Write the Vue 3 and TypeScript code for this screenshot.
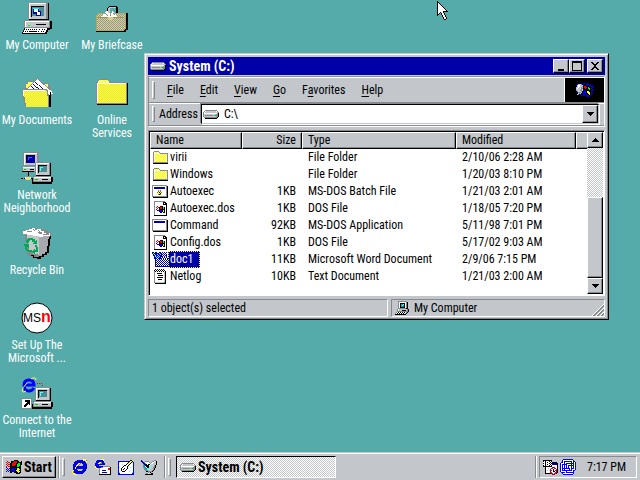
<script setup lang="ts">
import { h, ref, type FunctionalComponent } from 'vue'

type Bitmap = string[]

const palette: Record<string, string> = {
  k: '#000000', g: '#868a8e', s: '#c3c7cb', w: '#ffffff', n: '#00aa55',
  b: '#0000aa', B: '#0000ff', c: '#55ffff', t: '#00aaaa', y: '#ffff55',
  Y: '#ffff00', o: '#868a00', r: '#ff0000', R: '#aa0055', N: '#00ff00',
}

const bitmaps: Record<string, Bitmap> = {
  drive: [
    '..gggggggggggg..',
    '.gwsssssssssswg.',
    'gwsssssssssssssg',
    'gwwwwwwwwwwwwwgk',
    'gssssssssssssggk',
    'gsggggggggsNnggk',
    'gssssssssssssggk',
    '.gggggggggggggk.',
    '..kkkkkkkkkkkk..',
  ],
  folder: [
    '.ggggg.........',
    'gyyyyyg........',
    'gwwwwwwgggggggg',
    'gwyYwYyYwYyYwYg',
    'gwYyYwYyYwYyYwg',
    'gwyYwYyYwYyYwYg',
    'gwYyYwYyYwYyYwg',
    'gwyYwYyYwYyYwYg',
    'gwYyYwYyYwYyYwg',
    'gwyYwYyYwYyYwYg',
    'gwYyYwYyYwYyYwg',
    'ggggggggggggggg',
    'kkkkkkkkkkkkkkk',
  ],
  batch: [
    'ggggggggggggggg.',
    'gwwwwwwwwwwwwwgk',
    'gwbbbbbbBbBbBwgk',
    'gwbbbbbbbbbbbwgk',
    'gwwwwwwwwwwwwwgk',
    'gwwwwwowowwwwwgk',
    'gwwwwwoYowwwwwgk',
    'gwwwwoYkYowwwwgk',
    'gwwwwwYYkwwwwwgk',
    'gwwwwwokowwwwwgk',
    'gwwwwwwwwwwwwwgk',
    'gggggggggggggggk',
    '.kkkkkkkkkkkkkkk',
  ],
  app: [
    'ggggggggggggggg.',
    'gwwwwwwwwwwwwwgk',
    'gwbbbbbbBbBbBwgk',
    'gwbbbbbbbbbbbwgk',
    'gwwwwwwwwwwwwwgk',
    'gwwwwwwwwwwwwwgk',
    'gwwwwwwwwwwwwwgk',
    'gwwwwwwwwwwwwwgk',
    'gwwwwwwwwwwwwwgk',
    'gwwwwwwwwwwwwwgk',
    'gwwwwwwwwwwwwwgk',
    'gggggggggggggggk',
    '.kkkkkkkkkkkkkkk',
  ],
  system: [
    'ggggggggggg..',
    'gwwwwwwwwkkk.',
    'gwwwwwwwwkwkk',
    'gwwwwwwwwkkkk',
    'gwwwwwwwwwwwk',
    'gwwrwwkkkwwwk',
    'gwrwrkrrkNkwk',
    'gwwrwkrrkNkwk',
    'gwBwwkkkkkkwk',
    'gwwBBkBBkYkwk',
    'gwwwwkBBkYkwk',
    'gwwwwwkkwkkwk',
    'gwwwwwwwwwwwk',
    'gwwwwwwwwwwwk',
    'kkkkkkkkkkkkk',
  ],
  word: [
    'bb.bb..bb.b.b.b.',
    'BcbbbBbcBb.b.b..',
    '.bcbBcbBcbb.b.b.',
    '.bBcbbcBbbwbwbb.',
    '..bcBcbcbbbwbwb.',
    '..bBcbcBbwbwbwbw',
    '..bbb.bbbbwbwbwb',
    '...bwbwbwbwbwbwb',
    '...bbwbwbwbwbwbw',
    '...bwbwbwbwbwbwb',
    '...bbwbwbwbwbwbw',
    '...bwbwbwbwbwbwb',
    '...bbwbwbwbwbwbw',
    '...bwbwbwbwbwbwb',
    '...bbbbbbbbbbbbb',
  ],
  text: [
    '.k.k.k.k.k..',
    'kwkwkwkwkwk.',
    'gkwkwkwkwkwk',
    'gwwwwwwwwwsk',
    'gwwkkkkkwwsk',
    'gwwwwwwwwwsk',
    'gwwwkkkkkwsk',
    'gwwwwwwwwwsk',
    'gwwkkkkkkwsk',
    'gwwwwwwwwwsk',
    'gwwwkkkkwwsk',
    'gwwwwwwwwwsk',
    'gwwwwwwwwwsk',
    'gsssssssssgk',
    '.kkkkkkkkkkk',
  ],
  pc: [
    '...ggggggggg..',
    '...gwwwwwwwgk.',
    '...gwkkkkkwgk.',
    '...gwkttckwgk.',
    '...gwktctkwgk.',
    '...gwktttkwgk.',
    '...gwkkkkkwgk.',
    '...ggggggggkk.',
    '..gwssssssssgk',
    '..gwNsskkkksgk',
    '..gggggggggggk',
    '.gwkwkwkwkwgk.',
    'gwkwkwkwkwgk..',
    'kkkkkkkkkkk...',
  ],
  flag: [
    '........kkkk....',
    '.r...kkkrrrkk..k',
    'r.rr.kkrrrrkkkkk',
    '.r..kkrrrrkkNNkk',
    'r.rrkkrrrrkNNNkk',
    '.r..kkrrrkkNNNk.',
    'r.rrkkkkkkkNNkk.',
    'B...kkkkkkkkkkk.',
    '.B.BkkBBBBkYYkk.',
    'B.B.kBBBBkkYYYk.',
    '.B.BkBBBBkYYYkk.',
    'B.B.kkkBBkkYYYk.',
    '....kk..kkkkYkk.',
    '..........kkkk..',
  ],
  brand: [
    '.....B.BB..B......',
    '.BsssgkBkkBBBB....',
    'BswwsssBkkkBkBB.B.',
    '.swwssgkrrkkkkBB..',
    'sswssgskrrrkNkkkBB',
    'swsssggkkrkkNNkB..',
    'sssssgskkkkkkNkkBB',
    'gsssggsBBkkkkkkB..',
    '.gsssgkkBBkYYkkkB.',
    'B.gggskBBBkYYYkB..',
    '..sgs.BkBBkkYYkBB.',
    '.sg.B..B.BBkkYkB..',
    '.....B.BB.BBBkB...',
    '..........B.BB....',
  ],
  ie: [
    '...........yyy..',
    '.....bBBBBby.yo.',
    '...bBBBBBBBBb.y.',
    '..bBBBbbbBBBBby.',
    '..BBBb.yo.bBBBo.',
    '.bBBb.yo...BBBb.',
    '.BBB.yo....bBBb.',
    '.BBbyBBBBBBBBBb.',
    '.BByBBBBBBBBBBb.',
    '.BByBBBBBBBBBBb.',
    '.BBBb......bbb..',
    '.yBBBb....bBBb..',
    'yoBBBBbbbBBBb...',
    'yobBBBBBBBBb....',
    '.yyobBBBBbb.....',
    '..yyy...........',
  ],
  mail: [
    '......yyy.......',
    '..bBBBBby.......',
    '.bBBbbBBb.......',
    '.BBb.yoBB.......',
    'bBByyooBBb......',
    'BBBBBBBBBb......',
    'bBBb............',
    'ybBBbbBBggggggg.',
    'yobBBBggwwwwwwwk',
    '.yy.gwwwwwwwwrrk',
    '....gwwwwwwwwrrk',
    '....gwwbbbbwwwwk',
    '....gwwwwwwwwwwk',
    '....gwwbbbbbwwwk',
    '....gwwwwwwwwwwk',
    '....kkkkkkkkkkkk',
  ],
  desktop: [
    '............kkY.',
    'BBBBBBBBBBBkYyk.',
    'BcwwwwwwwwkYykcB',
    'BwwwwwwwwkYykwwB',
    'BwwwcwwwkwykwwwB',
    'BwwwwwkkwwkwwwwB',
    'BwwwwkwwwkcwwwwB',
    'BcwwkwwwwkwwcwwB',
    'BwwkwwkwwkwwwwwB',
    'BwwkwkwwkwwwwwwB',
    'BwwkwwwkwwwwwwwB',
    'BwwwkkkwwwwcwwwB',
    'BcwwwwwwwwwwwwcB',
    'BBwwwwwwwwwwwwBB',
    'BbBBBBBBBBBBBBbB',
  ],
  dish: [
    'b............gg.',
    'bb..gggg...ggwsk',
    '.bBgwwwwg.gwwssk',
    '..bBgwwwwgwwsssk',
    '..gbBkwkkwcssssk',
    '..gtkkkkwcsssgk.',
    '..gtwkkkccsssgk.',
    '..gttwkkcsssggk.',
    '...gttccssssgk..',
    '...ggtcsssssgk..',
    '....gggssssgk...',
    '.....kkggggk....',
    '.......gsk......',
    '.....ggwsskk....',
    '....kkkkkkkk....',
  ],
  schedule: [
    'kkkkkkkkk......',
    'kwkwwwkwk......',
    'wwkwkwwkwkkkkk.',
    'kwkwwwkwkbbbbbk',
    'wwkwkwwkwbbbbbk',
    'kwkwwwkwkwwwwwk',
    'kkkkkkkkkwwwwwk',
    '..kwwwwwwRRRwwk',
    '..kwwswsRrwrRwk',
    '..kwwwwRwwkwwRk',
    '..kwswsRrwkwrRk',
    '..kwwwwRwwkkwRk',
    '..kwwwwRrwwwrRk',
    '..kkkkkkRrwrRk.',
    '.........RRR...',
  ],
  network: [
    '...BBBBBBBBBB...',
    '..BwwwwwwwwwwB..',
    '..BwBBBBBBBBwBB.',
    '.BBwBwwwwwwBwBwB',
    'BwwwBwBBBBBBBBwB',
    'BwBBBBBwwwwBwBwB',
    'BwBwBwBwBBBBBBwB',
    'BwBwBwBwBwwBwBwB',
    'BwBwBwBwBwwBwBwB',
    'BwBBBBBBBBwBBBwB',
    'BwBwBwwwwBwBwwwB',
    'BwBBBBBBBBBBwBB.',
    'BwwwwwBwwwwwwB..',
    '.BBBBwBBBBBBBB..',
    '..BwwwwwwwwwwB..',
    '...BBBBBBBBBB...',
  ],
  cursor: [
    'k...........',
    'kk..........',
    'kwk.........',
    'kwwk........',
    'kwwwk.......',
    'kwwwwk......',
    'kwwwwwk.....',
    'kwwwwwwk....',
    'kwwwwwwwk...',
    'kwwwwwwwwk..',
    'kwwwwwkkkkk.',
    'kwwkwwk.....',
    'kwk.kwwk....',
    'kk..kwwk....',
    'k....kwwk...',
    '.....kwwk...',
    '......kwwk..',
    '......kwwk..',
    '.......kk...',
  ],
}

// Turns each run of equal letters in a bitmap into one rectangle of a path.
const PixelIcon: FunctionalComponent<{ name: string }> = ({ name }) => {
  const rows = bitmaps[name]
  const width = Math.max(...rows.map((row) => row.length))
  const paths: Record<string, string> = {}
  rows.forEach((row, y) => {
    for (const run of row.matchAll(/([^.])\1*/g)) {
      const n = run[0].length
      paths[run[1]] = (paths[run[1]] ?? '') + `M${run.index} ${y}h${n}v1h-${n}z`
    }
  })
  return h(
    'svg',
    { width, height: rows.length, viewBox: `0 0 ${width} ${rows.length}`, 'shape-rendering': 'crispEdges', 'aria-hidden': 'true' },
    Object.entries(paths).map(([key, d]) => h('path', { d, fill: palette[key] })),
  )
}
PixelIcon.props = ['name']

const desktopIcons = [
  { id: 'computer', label: 'My Computer' },
  { id: 'documents', label: 'My Documents' },
  { id: 'network', label: 'Network\nNeighborhood' },
  { id: 'recycle', label: 'Recycle Bin' },
  { id: 'msn', label: 'Set Up The\nMicrosoft ...' },
  { id: 'connect', label: 'Connect to the\nInternet' },
  { id: 'briefcase', label: 'My Briefcase' },
  { id: 'services', label: 'Online\nServices' },
]

const menus = [
  ['', 'F', 'ile'], ['', 'E', 'dit'], ['', 'V', 'iew'],
  ['', 'G', 'o'], ['F', 'a', 'vorites'], ['', 'H', 'elp'],
]

const files = [
  { name: 'virii', icon: 'folder', size: '', type: 'File Folder', modified: '2/10/06 2:28 AM' },
  { name: 'Windows', icon: 'folder', size: '', type: 'File Folder', modified: '1/20/03 8:10 PM' },
  { name: 'Autoexec', icon: 'batch', size: '1KB', type: 'MS-DOS Batch File', modified: '1/21/03 2:01 AM' },
  { name: 'Autoexec.dos', icon: 'system', size: '1KB', type: 'DOS File', modified: '1/18/05 7:20 PM' },
  { name: 'Command', icon: 'app', size: '92KB', type: 'MS-DOS Application', modified: '5/11/98 7:01 PM' },
  { name: 'Config.dos', icon: 'system', size: '1KB', type: 'DOS File', modified: '5/17/02 9:03 AM' },
  { name: 'doc1', icon: 'word', size: '11KB', type: 'Microsoft Word Document', modified: '2/9/06 7:15 PM' },
  { name: 'Netlog', icon: 'text', size: '10KB', type: 'Text Document', modified: '1/21/03 2:00 AM' },
]

const selected = ref('doc1')
const drive = ref('C:\\')
const launchers = [
  { icon: 'ie', label: 'Internet Explorer' },
  { icon: 'mail', label: 'Mail' },
  { icon: 'desktop', label: 'Show Desktop' },
  { icon: 'dish', label: 'Channels' },
]
</script>

<template>
  <div class="screen">
    <main class="desktop">
      <button v-for="item in desktopIcons" :key="item.id" class="shortcut" type="button">
        <svg width="32" height="32" viewBox="0 0 32 32" shape-rendering="crispEdges" aria-hidden="true">
          <defs>
            <pattern :id="`dots-${item.id}`" width="2" height="2" patternUnits="userSpaceOnUse">
              <path d="M0 0h1v1h-1zM1 1h1v1h-1z" :fill="item.id === 'briefcase' ? '#969684' : '#ffff00'" />
              <path d="M1 0h1v1h-1zM0 1h1v1h-1z" :fill="item.id === 'briefcase' ? '#d8d2a0' : '#e4e474'" />
            </pattern>
          </defs>
          <g v-if="item.id === 'computer'">
            <path d="M7 1h2v-1h19v18h-21z" fill="#868a8e" />
            <path d="M27 1h1v17h-1zM8 17h20v1h-20z" fill="#000" />
            <path d="M8 1h17v16h-17z" fill="#c3c7cb" />
            <path d="M8 1h17v1h-16v15h-1z" fill="#fff" />
            <path d="M10 4h13v1h-12v10h-1z" fill="#000" />
            <path d="M11 5h12v9h-12z" fill="#4a8f93" />
            <path d="M12 6h6v1h-5v4h-1z" fill="#0ff" />
            <path d="M12 7h6v5h-6zM15 9h5v5h-5z" fill="#00a" />
            <path d="M13 7h4v3h-4zM16 10h3v3h-3z" fill="#fff" />
            <path d="M4 19h27v8h-2v1h-25z" fill="#000" />
            <path d="M3 18h26v8h-26z" fill="#868a8e" />
            <path d="M4 19h24v6h-24z" fill="#c3c7cb" />
            <path d="M4 19h24v1h-23v5h-1z" fill="#fff" />
            <path d="M7 23h2v1h-2z" fill="#0f0" />
            <path d="M15 22h10v1h-10z" fill="#000" />
            <path d="M3 26h25v2h-1v2h-1v2h-25v-2h1v-2h1z" fill="#000" />
            <path d="M4 26h22v2h-1v2h-1v1h-22v-1h1v-2h1z" fill="#fff" />
            <path d="M5 27h1v1h-1zM7 27h1v1h-1zM9 27h1v1h-1zM11 27h1v1h-1zM13 27h1v1h-1zM15 27h1v1h-1zM18 27h1v1h-1zM21 27h1v1h-1zM23 27h1v1h-1zM4 29h1v1h-1zM6 29h1v1h-1zM8 29h8v1h-8zM17 29h1v1h-1zM20 29h1v1h-1zM22 29h1v1h-1z" fill="#000" />
          </g>
          <g v-else-if="item.id === 'documents'">
            <path d="M4 10v-4h2v-2h6l2 2h14v3h2v18h-26z" fill="#868a8e" />
            <path d="M5 11v-4h2v-2h5l1 2h14v4z" fill="#ff5" />
            <path d="M5 12l11-11 14 12v3l-3 3z" fill="#868a8e" />
            <path d="M6 13l10-11 14 12-3 4z" fill="#fff" />
            <path d="M14 5h1v1h1v1h1v1h-1v-1h-1v-1h-1zM12 7h1v1h1v1h1v1h1v1h-1v-1h-1v-1h-1v-1h-1zM10 9h1v1h1v1h1v1h-1v-1h-1v-1h-1zM18 8h1v1h1v1h1v1h1v1h-1v-1h-1v-1h-1v-1h-1zM16 10h1v1h1v1h-1v-1h-1z" fill="#00a" />
            <path d="M29 13h1v1h1v2h1v1h-2v1h-2v-3h1z" fill="#fff" />
            <path d="M1 12h25v1h1v5h1v12h-24v-3h-1v-5h-1v-5h-1z" fill="#868a8e" />
            <path d="M2 13h23v1h1v5h1v11h-22v-4h-1v-6h-1v-4h-1z" fill="url(#dots-documents)" />
            <path d="M2 13h22v1h-21v5h-1z" fill="#fff" />
            <path d="M4 30h26v-15h-1v3h-1v12h-24z" fill="#000" />
          </g>
          <g v-else-if="item.id === 'network' || item.id === 'connect'">
            <g v-if="item.id === 'network'">
              <path d="M2 1h1v-1h15v14h-16z" fill="#868a8e" />
              <path d="M3 1h13v12h-13z" fill="#c3c7cb" />
              <path d="M3 1h13v1h-12v11h-1z" fill="#fff" />
              <path d="M5 3h9v1h-8v7h-1z" fill="#000" />
              <path d="M6 4h8v7h-8z" fill="#00a" />
              <path d="M7 5h4v1h-3v2h-1z" fill="#55f" />
              <path d="M1 15h16v5h-16z" fill="#868a8e" />
              <path d="M2 15h14v4h-14z" fill="#c3c7cb" />
              <path d="M2 15h14v1h-14z" fill="#fff" />
              <path d="M3 17h2v1h-2z" fill="#0c0" />
              <path d="M9 17h4v1h-4zM1 19h12v1h-12z" fill="#000" />
              <path d="M6 20h2v5h-2z" fill="#868a8e" />
              <path d="M7 20h1v4h-1zM0 26h2v1h-2zM3 26h10v1h-10z" fill="#000" />
              <path d="M4 25h6v2h-6z" fill="#fff" />
              <path d="M5 25h4v3h-4z" fill="#e4e474" />
            </g>
            <g v-else>
              <path d="M0 21h11v11h-11z" fill="#868a8e" />
              <path d="M1 22h9v9h-9z" fill="#fff" />
              <path d="M4 23h5v5h-1v-1h-1v1h-1v1h-1v1h-2v-2h1v-1h1v-1h1v-1h-2z" fill="#000" />
              <path d="M16 6h1v1h-1zM18 6h1v1h-1zM20 6h1v1h-1zM21 8h1v1h-1zM21 10h1v1h-1z" fill="#f00" />
              <g shape-rendering="auto" fill="none">
                <path d="M13 11Q11 14 8 14Q3 14 3 8Q3 3 8 3Q13 3 13 8H4" stroke="#0000ff" stroke-width="3" />
                <path d="M6 6Q1 11 1 14Q2 16 5 14M10 2Q15 -1 15 3" stroke="#ff5" stroke-width="1" />
              </g>
            </g>
            <path d="M14 11h1v-1h15v14h-16z" fill="#868a8e" />
            <path d="M29 11h1v13h-1zM15 23h15v1h-15z" fill="#000" />
            <path d="M15 11h13v12h-13z" fill="#c3c7cb" />
            <path d="M15 11h13v1h-12v11h-1z" fill="#fff" />
            <path d="M17 13h9v1h-8v7h-1z" fill="#000" />
            <path d="M18 14h8v6h-8z" fill="#4a8f93" />
            <path d="M19 15h3v1h-2v3h-1z" fill="#5ff" />
            <path d="M12 25h20v5h-1v2h-20v-5h1z" fill="#000" />
            <path d="M12 24h18v6h-18z" fill="#868a8e" />
            <path d="M13 25h17v4h-17z" fill="#c3c7cb" />
            <path d="M13 25h17v1h-17z" fill="#fff" />
            <path d="M14 27h3v1h-3z" fill="#0c0" />
            <path d="M21 27h6v1h-6z" fill="#000" />
          </g>
          <g v-else-if="item.id === 'recycle'">
            <path d="M1 3h5v-1h3v-1h9v1h5v1h4v2h3v5h-1v7h-1v7h-1v2h-2v2h-3v2h-3v2h-3v-1h-5v-2h-4v-3h-1v-5h-1v-7h-1v-7h-1z" fill="#868a8e" />
            <path d="M3 5h5v1h6v1h6v1h4v18h-2v2h-5v-1h-5v-2h-4v-5h-1v-7h-1v-7h-1z" fill="#c3c7cb" />
            <path d="M18 9h4v-1h6v4h-1v7h-1v6h-3v2h-3v2h-2z" fill="#a6aaae" />
            <path d="M2 4h4v1h6v1h6v1h4v1h6v-2h1v3h-7v1h-4v-1h-6v-1h-6v-1h-4z" fill="#fff" />
            <path d="M8 2h3v-1h3v2h2v-1h4v2h3v2h2v1h-4v-2h-4v2h-5v-2h-3v-1h-4v-1h3z" fill="#fff" />
            <path d="M12 2h1v1h1v1h-1v-1h-1zM17 3h1v1h1v1h-1v-1h-1zM9 4h2v1h-2z" fill="#868a8e" />
            <path d="M6 12h1v-1h5v1h2v2h1v-1h1v4h-4v-1h1v-1h-2v-2h-2v1h-1v2h-2v-1h-1zM3 17h5v4h-1v-1h-1v2h1v1h4v2h-4v-1h-2v-2h-1v-3h-1zM14 18h2v2h1v5h-3v2h-1v-1h-1v-1h-1v-1h1v-1h1v-1h1v1h1v-3h-1z" fill="#00aa55" />
            <path d="M29 9h1v3h-1v7h-1v7h-2v2h-3v2h-3v2h-4v-1h-4v-2h-2v-1h3v2h5v-1h3v-2h3v-2h2v-6h1v-7h1z" fill="#000" />
          </g>
          <g v-else-if="item.id === 'msn'" shape-rendering="auto">
            <circle cx="16" cy="16" r="15" fill="#fff" stroke="#000" />
            <text class="msn-mark" x="2" y="20">MS</text>
            <text class="msn-mark msn-n" x="20" y="20">n</text>
          </g>
          <g v-else-if="item.id === 'briefcase'">
            <path d="M11 11v-5h1v-1h1v-1h8v1h1v6h-2v-5h-6v5z" fill="#000" />
            <path d="M12 11v-5h1v-1h7v1h-6v5z" fill="#c3c7cb" />
            <path d="M0 14l2-2h27v-1h3v17h-2v2h-30z" fill="#000" />
            <path d="M0 14l2-3h28v15l-2 3h-28z" fill="#b0a860" />
            <path d="M1 15h27v13h-27zM3 12h26v13l-1 2v-12h-27z" fill="url(#dots-briefcase)" />
            <path d="M5 14h2v-2h2v-2h1v-1h2v2h2v2h1v-2h1v-2h1v1h1v2h2v2h1v2h-16z" fill="#fff" />
            <path d="M9 11h1v1h1v1h1v1h-1v-1h-1v-1h-1zM14 13h1v1h-1zM17 11h1v1h1v1h-1v-1h-1z" fill="#868a8e" />
            <path d="M1 15h27v1h-27z" fill="#9c9450" />
            <path d="M12 15h5v3h-5z" fill="#d8d08a" />
          </g>
          <g v-else>
            <path d="M0 5h2v-2h1v-1h9v1h1v1h1v1h17v22h-31z" fill="#868a8e" />
            <path d="M3 3h9v1h1v2h-11v-2h1z" fill="#ff5" />
            <path d="M1 6h29v20h-29z" fill="url(#dots-services)" />
            <path d="M1 6h29v1h-28v19h-1z" fill="#fff" />
            <path d="M31 6h1v22h-31v-1h30z" fill="#000" />
          </g>
        </svg>
        <span>{{ item.label }}</span>
      </button>
    </main>

    <section class="window" aria-label="System (C:)">
      <header class="titlebar">
        <PixelIcon name="drive" />
        <h1>System (C:)</h1>
        <div class="controls">
          <button type="button" aria-label="Minimize">
            <svg width="12" height="10" viewBox="0 0 12 10" shape-rendering="crispEdges"><path d="M3 8h6v2h-6z" /></svg>
          </button>
          <button type="button" aria-label="Maximize">
            <svg width="12" height="10" viewBox="0 0 12 10" shape-rendering="crispEdges"><path fill-rule="evenodd" d="M1 0h10v10h-10zM2 2v7h8v-7z" /></svg>
          </button>
          <button type="button" aria-label="Close" class="close">
            <svg width="12" height="10" viewBox="0 0 12 10" shape-rendering="crispEdges"><path d="M2 1h2v1h1v1h2v-1h1v-1h2v1h-1v1h-1v1h-1v2h1v1h1v1h1v1h-2v-1h-1v-1h-2v1h-1v1h-2v-1h1v-1h1v-1h1v-2h-1v-1h-1v-1h-1z" /></svg>
          </button>
        </div>
      </header>

      <div class="bars">
        <div class="band">
          <i class="grip"></i>
          <nav class="menus">
            <button v-for="menu in menus" :key="menu.join('')" type="button">{{ menu[0] }}<u>{{ menu[1] }}</u>{{ menu[2] }}</button>
          </nav>
          <div class="brand"><PixelIcon name="brand" /></div>
        </div>
        <div class="band address">
          <i class="grip"></i>
          <label for="address">Address</label>
          <div class="combo">
            <select id="address" v-model="drive">
              <option value="C:\">C:\</option>
            </select>
            <PixelIcon name="drive" class="combo-icon" />
            <span class="combo-arrow">
              <svg width="7" height="4" viewBox="0 0 7 4" shape-rendering="crispEdges"><path d="M0 0h7v1h-1v1h-1v1h-1v1h-1v-1h-1v-1h-1v-1h-1z" /></svg>
            </span>
          </div>
        </div>
      </div>

      <div class="list">
        <table>
          <colgroup>
            <col class="c-name" /><col class="c-size" /><col class="c-type" /><col class="c-date" /><col />
          </colgroup>
          <thead>
            <tr>
              <th scope="col">Name</th>
              <th scope="col" class="size">Size</th>
              <th scope="col">Type</th>
              <th scope="col">Modified</th>
              <td class="rest"></td>
            </tr>
          </thead>
          <tbody>
            <tr v-for="file in files" :key="file.name" @click="selected = file.name">
              <td>
                <div class="file" :class="{ selected: selected === file.name }">
                  <span class="file-icon"><PixelIcon :name="file.icon" /></span>
                  <span class="file-name">{{ file.name }}</span>
                </div>
              </td>
              <td class="size">{{ file.size }}</td>
              <td>{{ file.type }}</td>
              <td>{{ file.modified }}</td>
              <td></td>
            </tr>
          </tbody>
        </table>
        <div class="scrollbar">
          <button type="button" aria-label="Scroll up">
            <svg width="7" height="4" viewBox="0 0 7 4" shape-rendering="crispEdges"><path d="M3 0h1v1h1v1h1v1h1v1h-7v-1h1v-1h1v-1h1z" /></svg>
          </button>
          <div class="track"></div>
          <div class="thumb"></div>
          <button type="button" aria-label="Scroll down">
            <svg width="7" height="4" viewBox="0 0 7 4" shape-rendering="crispEdges"><path d="M0 0h7v1h-1v1h-1v1h-1v1h-1v-1h-1v-1h-1v-1h-1z" /></svg>
          </button>
        </div>
      </div>

      <footer class="status">
        <p>1 object(s) selected</p>
        <p>
          <PixelIcon name="pc" />
          <span>My Computer</span>
          <svg class="resize" width="12" height="12" viewBox="0 0 12 12" aria-hidden="true">
            <path d="M0 12L12 0M4 12L12 4M8 12L12 8" stroke="#fff" />
            <path d="M1 12L12 1M2 12L12 2M5 12L12 5M6 12L12 6M9 12L12 9M10 12L12 10" stroke="#868a8e" />
          </svg>
        </p>
      </footer>
    </section>

    <footer class="taskbar">
      <button class="start" type="button"><PixelIcon name="flag" /><span>Start</span></button>
      <i class="divider"></i>
      <i class="grip"></i>
      <div class="launchers">
        <button v-for="item in launchers" :key="item.icon" type="button" :aria-label="item.label">
          <PixelIcon :name="item.icon" />
        </button>
      </div>
      <i class="divider"></i>
      <i class="grip"></i>
      <button class="task" type="button"><PixelIcon name="drive" /><span>System (C:)</span></button>
      <i class="divider push"></i>
      <div class="tray">
        <PixelIcon name="schedule" />
        <PixelIcon name="network" />
        <time>7:17 PM</time>
      </div>
    </footer>

    <PixelIcon name="cursor" class="cursor" />
  </div>
</template>

<style>
body {
  margin: 0;
  background: #55aaaa;
}
</style>

<style scoped>
.screen {
  --face: #c3c7cb;
  --shade: #868a8e;
  --navy: #0000aa;
  position: relative;
  display: flex;
  flex-direction: column;
  min-height: 100vh;
  overflow: hidden;
  background: #55aaaa;
  color: #000;
  font: 12px/13px "Roboto Condensed", "Liberation Sans", sans-serif;
}
.screen * {
  box-sizing: border-box;
}
svg {
  display: block;
  flex: none;
}
button,
select {
  margin: 0;
  padding: 0;
  border: 0;
  border-radius: 0;
  background: none;
  color: inherit;
  font: inherit;
}

/* desktop */
.desktop {
  flex: 1;
  display: grid;
  grid-auto-flow: column;
  grid-template-rows: repeat(6, 75px);
  grid-auto-columns: 75px;
  align-content: start;
}
.shortcut {
  display: flex;
  flex-direction: column;
  align-items: center;
  justify-content: flex-start;
  gap: 5px;
  padding: 2px 1px 0 0;
  color: #fff;
  text-align: center;
  white-space: pre;
}
.msn-mark {
  font: 12px "Liberation Sans", sans-serif;
}
.msn-n {
  fill: #f00;
  font-weight: bold;
  font-size: 16px;
}

/* window */
.window {
  position: absolute;
  left: 144px;
  right: 31px;
  top: 53px;
  padding: 2px;
  border: 1px solid;
  border-color: var(--face) #000 #000 var(--face);
  background: var(--face);
  box-shadow: inset 1px 1px #fff, inset -1px -1px var(--shade);
}
.titlebar {
  display: flex;
  align-items: center;
  height: 18px;
  margin: 1px;
  padding: 0 2px;
  gap: 3px;
  background: var(--navy);
  color: #fff;
}
h1 {
  flex: 1;
  margin: 0;
  font: bold 14px/16px "Roboto Condensed", "Liberation Sans", sans-serif;
}
.controls {
  display: flex;
}
.controls button {
  width: 16px;
  height: 14px;
  padding: 1px 1px 2px;
}
.controls button,
.scrollbar button,
.thumb,
.combo-arrow,
.start {
  border: 1px solid;
  border-color: #fff #000 #000 #fff;
  background: var(--face);
  box-shadow: inset -1px -1px var(--shade);
}
.controls .close {
  margin-left: 2px;
}

.bars {
  margin: 0 1px;
  border: 1px solid;
  border-color: var(--shade) #fff #fff var(--shade);
}
.band {
  display: flex;
  align-items: stretch;
  height: 25px;
  border-top: 1px solid #fff;
}
.address {
  height: 24px;
  border-top-color: var(--shade);
  box-shadow: inset 0 1px #fff;
  border-bottom: 1px solid var(--shade);
}
.grip {
  flex: none;
  width: 3px;
  margin: 3px 3px;
  border: 1px solid;
  border-color: #fff var(--shade) var(--shade) #fff;
}
.menus {
  flex: 1;
  display: flex;
  align-items: center;
  padding-left: 1px;
}
.menus button {
  padding: 0 8px;
}
u {
  text-underline-offset: 2px;
}
.brand {
  display: flex;
  align-items: center;
  justify-content: center;
  width: 40px;
  border-left: 1px solid #fff;
  background: #000;
}
label {
  align-self: center;
  padding: 0 3px 0 1px;
}
.combo {
  flex: 1;
  display: grid;
  align-items: center;
  margin: 1px 5px 1px 0;
  border: 1px solid;
  border-color: #000 var(--face) var(--face) #000;
  background: #fff;
  box-shadow: -1px -1px var(--shade), 1px 1px #fff;
}
.combo > * {
  grid-area: 1 / 1;
}
.combo select {
  width: 100%;
  height: 100%;
  padding-left: 22px;
  appearance: none;
  outline: none;
}
.combo-icon {
  margin-left: 1px;
}
.combo-icon,
.combo-arrow {
  pointer-events: none;
}
.combo-arrow {
  justify-self: end;
  display: grid;
  place-items: center;
  width: 16px;
  height: 100%;
}

.list {
  display: flex;
  margin: 3px 1px 0;
  border: 1px solid;
  border-color: var(--shade) #fff #fff var(--shade);
  box-shadow: inset 1px 1px #000;
  padding: 1px;
  background: #fff;
}
table {
  flex: 1;
  align-self: flex-start;
  table-layout: fixed;
  width: 100%;
  margin-bottom: 9px;
  border-collapse: separate;
  border-spacing: 0;
}
.c-name { width: 92px; }
.c-size { width: 60px; }
.c-type { width: 154px; }
.c-date { width: 120px; }
th,
.rest {
  height: 17px;
  padding: 0 5px;
  border: 1px solid;
  border-color: #fff #000 #000 #fff;
  background: var(--face);
  box-shadow: inset -1px -1px var(--shade);
  font-weight: normal;
  text-align: left;
}
.rest {
  border-right: 0;
  box-shadow: inset 0 -1px var(--shade);
}
tbody td {
  height: 17px;
  padding: 0 0 0 6px;
  white-space: nowrap;
}
tbody td:first-child {
  padding: 0 0 0 2px;
}
th.size {
  text-align: right;
}
tbody .size {
  padding: 0 6px 0 0;
  text-align: right;
}
.file {
  display: flex;
  align-items: center;
  height: 17px;
}
.file-icon {
  display: flex;
  justify-content: center;
  width: 16px;
}
.file-name {
  height: 17px;
  padding: 2px 2px 2px;
}
.selected .file-name {
  padding: 1px 6px 1px 1px;
  border: 1px dotted #ffff55;
  background: var(--navy);
  color: #fff;
}
.scrollbar {
  flex: none;
  display: flex;
  flex-direction: column;
  width: 16px;
}
.scrollbar button {
  display: grid;
  place-items: center;
  flex: none;
  height: 16px;
}
.track {
  flex: 5;
  background: repeating-conic-gradient(#fff 0 25%, var(--face) 0 50%) 0 0 / 2px 2px;
}
.thumb {
  flex: 8;
}

.status {
  display: flex;
  gap: 3px;
  margin: 3px 1px 0;
}
.status p {
  display: flex;
  align-items: center;
  height: 18px;
  margin: 0;
  padding: 0 3px;
  gap: 5px;
  border: 1px solid;
  border-color: var(--shade) #fff #fff var(--shade);
}
.status p:first-child {
  flex: 0 0 240px;
}
.status p:last-child {
  flex: 1;
  padding-right: 0;
}
.resize {
  align-self: flex-end;
  margin-left: auto;
}

/* taskbar */
.taskbar {
  display: flex;
  align-items: stretch;
  height: 28px;
  padding: 3px 3px 2px 2px;
  border-top: 1px solid var(--face);
  background: var(--face);
  box-shadow: inset 0 1px #fff;
}
.taskbar button {
  display: flex;
  align-items: center;
}
.start,
.task {
  font: bold 14px/16px "Roboto Condensed", "Liberation Sans", sans-serif;
}
.taskbar .start {
  width: 54px;
  padding-left: 3px;
  gap: 2px;
}
.divider {
  flex: none;
  width: 2px;
  margin: 0 0 0 2px;
  border-left: 1px solid var(--shade);
  border-right: 1px solid #fff;
}
.push {
  margin: 0 2px 0 auto;
}
.taskbar .grip {
  margin: 2px;
}
.launchers {
  display: flex;
  gap: 7px;
  padding: 0 5px 0 5px;
}
.launchers button {
  width: 16px;
}
.taskbar .task {
  flex: 0 1 160px;
  padding-left: 3px;
  gap: 2px;
  margin-left: 3px;
  border: 1px solid;
  border-color: #000 #fff #fff #000;
  background: repeating-conic-gradient(#fff 0 25%, var(--face) 0 50%) 0 0 / 2px 2px;
}
.tray {
  display: flex;
  align-items: center;
  padding: 0 10px 0 3px;
  gap: 2px;
  border: 1px solid;
  border-color: var(--shade) #fff #fff var(--shade);
}
time {
  padding-left: 9px;
}
.cursor {
  position: absolute;
  left: 437px;
  top: 1px;
}
</style>
